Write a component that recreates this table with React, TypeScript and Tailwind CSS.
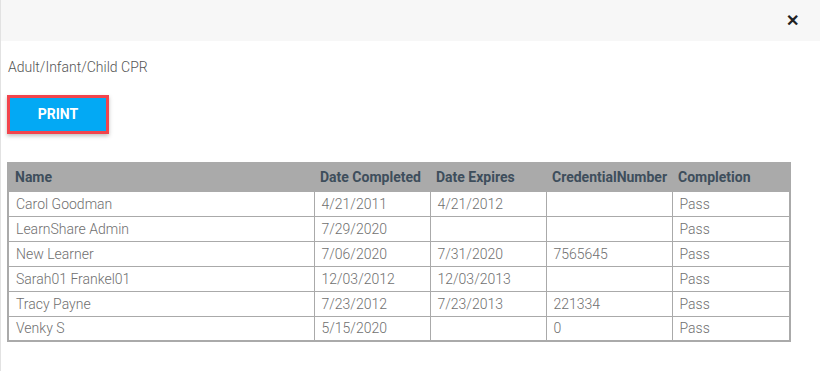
import React from "react";

type Row = {
    name: string;
    completed: string;
    expires: string;
    credential: string;
    completion: string;
};

const rows: Row[] = [
    { name: "Carol Goodman", completed: "4/21/2011", expires: "4/21/2012", credential: "", completion: "Pass" },
    { name: "LearnShare Admin", completed: "7/29/2020", expires: "", credential: "", completion: "Pass" },
    { name: "New Learner", completed: "7/06/2020", expires: "7/31/2020", credential: "7565645", completion: "Pass" },
    { name: "Sarah01 Frankel01", completed: "12/03/2012", expires: "12/03/2013", credential: "", completion: "Pass" },
    { name: "Tracy Payne", completed: "7/23/2012", expires: "7/23/2013", credential: "221334", completion: "Pass" },
    { name: "Venky S", completed: "5/15/2020", expires: "", credential: "0", completion: "Pass" },
];

function Cell({ children }: { children?: React.ReactNode }) {
    return (
        <td className="h-[25px] border border-[#aaaaaa] px-[7px] py-0 text-[14px] font-light text-[#6f6f6f] leading-none">
            {children}
        </td>
    );
}

function Head({ children, width }: { children: React.ReactNode; width: string }) {
    return (
        <th className={`${width} h-[28px] px-[6px] py-0 text-left text-[14px] font-bold text-[#3e4e5c]`}>
            {children}
        </th>
    );
}

export default function App() {
    return (
        <div className="w-[820px] h-[371px] bg-white border-l border-[#e2e2e2] font-['Roboto',sans-serif] overflow-hidden">
            <div className="h-[41px] bg-[#f7f7f7] flex items-center justify-end pr-[21px]">
                <span className="text-[16px] font-bold text-[#222] leading-none">✕</span>
            </div>

            <p className="mt-[16px] ml-[7px] text-[14px] leading-[20px] font-light text-[#555]">
                Adult/Infant/Child CPR
            </p>

            <button className="mt-[18px] ml-[6px] w-[102px] h-[39px] border-[3px] border-[#f2444c] bg-[#03a9f4] text-white text-[14px] font-bold shadow-[0_2px_4px_rgba(0,0,0,0.25)] flex items-center justify-center">
                PRINT
            </button>

            <table className="mt-[28px] ml-[6px] w-[784px] table-fixed border-collapse border-2 border-[#aaaaaa]">
                <thead>
                    <tr className="bg-[#aaaaaa]">
                        <Head width="w-[306px]">Name</Head>
                        <Head width="w-[116px]">Date Completed</Head>
                        <Head width="w-[116px]">Date Expires</Head>
                        <Head width="w-[126px]">CredentialNumber</Head>
                        <Head width="w-[118px]">Completion</Head>
                    </tr>
                </thead>
                <tbody>
                    {rows.map((r) => (
                        <tr key={r.name}>
                            <Cell>{r.name}</Cell>
                            <Cell>{r.completed}</Cell>
                            <Cell>{r.expires}</Cell>
                            <Cell>{r.credential}</Cell>
                            <Cell>{r.completion}</Cell>
                        </tr>
                    ))}
                </tbody>
            </table>
        </div>
    );
}
